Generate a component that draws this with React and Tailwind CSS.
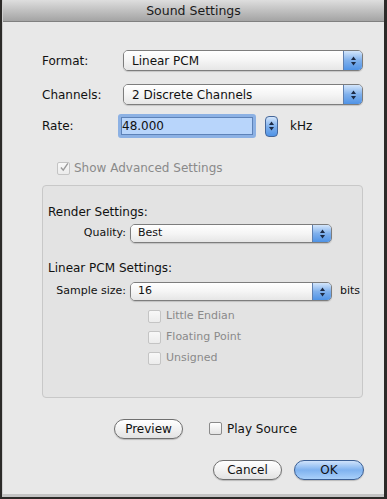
const FONT = { fontFamily: '"DejaVu Sans", "Liberation Sans", sans-serif' };

function Arrows() {
  return (
    <svg width="7" height="12" viewBox="0 0 7 12">
      <path d="M3.5 1.5 L6 5 L1 5 Z" fill="#1c2a44" />
      <path d="M3.5 10.5 L6 7 L1 7 Z" fill="#1c2a44" />
    </svg>
  );
}

function PopUp({ label, className = "", small = false }) {
  return (
    <div
      className={`flex overflow-hidden rounded-[5px] border border-[#7d7d7d] shadow-[0_1px_1px_rgba(0,0,0,0.15)] ${className}`}
    >
      <div
        className={`flex flex-1 items-center bg-gradient-to-b from-[#ffffff] via-[#f5f5f5] to-[#e6e6e6] ${
          small ? "pl-[7px] text-[11px]" : "pl-[8px] text-[12px]"
        } text-[#111]`}
      >
        {label}
      </div>
      <div className="flex w-[19px] items-center justify-center border-l border-[#5f7fae] bg-gradient-to-b from-[#d4e6fb] via-[#7fb0ec] to-[#4f93e6]">
        <Arrows />
      </div>
    </div>
  );
}

function Check({ checked = false, disabled = false }) {
  return (
    <div
      className={`flex h-[13px] w-[13px] shrink-0 items-center justify-center rounded-[2px] border ${
        disabled
          ? "border-[#c4c4c4] bg-gradient-to-b from-[#f8f8f8] to-[#ececec]"
          : "border-[#8a8a8a] bg-gradient-to-b from-[#ffffff] to-[#e4e4e4]"
      }`}
    >
      {checked && (
        <svg width="13" height="13" viewBox="0 0 13 13" className="-mt-[2px] ml-[1px]">
          <path d="M2.5 6.5 L5.5 10 L11.5 1" fill="none" stroke="#9a9a9a" strokeWidth="1.8" />
        </svg>
      )}
    </div>
  );
}

function Pill({ children, blue = false, className = "" }) {
  return (
    <div
      className={`flex h-[20px] items-center justify-center rounded-full border text-[12px] ${
        blue
          ? "border-[#3b5f94] bg-gradient-to-b from-[#cfe3fb] via-[#7fb2ef] to-[#a9d0fa] text-[#111]"
          : "border-[#6f6f6f] bg-gradient-to-b from-[#ffffff] via-[#f2f2f2] to-[#e2e2e2] text-[#111]"
      } shadow-[0_1px_1px_rgba(0,0,0,0.2)] ${className}`}
    >
      {children}
    </div>
  );
}

export default function App() {
  return (
    <div className="flex h-[499px] w-[387px] flex-col bg-[#2c2a28]" style={FONT}>
      <div className="ml-[2px] flex h-[494px] w-[382px] flex-col border-l border-[#cfcfcf] bg-[#e8e8e8]">
        <div className="flex h-[22px] items-center justify-center border-b border-[#808080] bg-gradient-to-b from-[#dedede] to-[#a4a4a4] pt-[1px] text-[12.5px] text-[#1a1a1a]">
          Sound Settings
        </div>

        <div className="flex flex-col pl-[39px] pr-[20px] pt-[28px]">
          <div className="flex h-[21px] items-center">
            <div className="w-[81px] text-[12px] text-[#111]">Format:</div>
            <PopUp label="Linear PCM" className="h-[21px] w-[240px]" />
          </div>

          <div className="mt-[13px] flex h-[21px] items-center">
            <div className="w-[81px] text-[12px] text-[#111]">Channels:</div>
            <PopUp label="2 Discrete Channels" className="h-[21px] w-[240px]" />
          </div>

          <div className="mt-[9px] flex h-[24px] items-center">
            <div className="w-[76px] text-[12px] text-[#111]">Rate:</div>
            <div className="flex h-[24px] w-[138px] items-center rounded-[3px] border-[3px] border-[#8cb1e4] bg-[#b8d5fb] pl-[1px] text-[12px] text-[#111] shadow-[inset_0_0_0_1px_#5d82b8]">
              48.000
            </div>
            <div className="ml-[9px] flex h-[21px] w-[13px] items-center justify-center rounded-[4px] border border-[#45679a] bg-gradient-to-b from-[#d4e6fb] via-[#7fb0ec] to-[#4f93e6]">
              <Arrows />
            </div>
            <div className="ml-[12px] text-[12px] text-[#111]">kHz</div>
          </div>

          <div className="ml-[15px] mt-[22px] flex h-[16px] items-center gap-[4px]">
            <Check checked disabled />
            <span className="text-[12px] text-[#8a8a8a]">Show Advanced Settings</span>
          </div>

          <div className="mt-[9px] flex h-[213px] w-[321px] flex-col rounded-[4px] border border-[#c8c8c8] bg-[#e3e3e3] pl-[5px] pt-[19px]">
            <div className="text-[12px] leading-[15px] text-[#111]">Render Settings:</div>
            <div className="mt-[4px] flex h-[19px] items-center">
              <div className="w-[82px] pr-[4px] text-right text-[11px] text-[#111]">Quality:</div>
              <PopUp label="Best" small className="h-[19px] w-[202px]" />
            </div>

            <div className="mt-[18px] text-[12px] leading-[15px] text-[#111]">Linear PCM Settings:</div>
            <div className="mt-[6px] flex h-[19px] items-center">
              <div className="w-[82px] pr-[4px] text-right text-[11px] text-[#111]">Sample size:</div>
              <PopUp label="16" small className="h-[19px] w-[202px]" />
              <div className="ml-[8px] text-[11px] text-[#111]">bits</div>
            </div>

            <div className="ml-[100px] mt-[8px] flex flex-col gap-[7px]">
              {["Little Endian", "Floating Point", "Unsigned"].map((t) => (
                <div key={t} className="flex h-[14px] items-center gap-[5px]">
                  <Check disabled />
                  <span className="text-[11px] text-[#8a8a8a]">{t}</span>
                </div>
              ))}
            </div>
          </div>

          <div className="mt-[20px] flex h-[21px] items-center">
            <Pill className="ml-[72px] w-[69px]">Preview</Pill>
            <div className="ml-[26px] flex items-center gap-[5px]">
              <Check />
              <span className="text-[12px] text-[#111]">Play Source</span>
            </div>
          </div>

          <div className="mt-[20px] flex h-[21px] items-center">
            <Pill className="ml-[171px] w-[69px]">Cancel</Pill>
            <Pill blue className="ml-[12px] w-[70px]">OK</Pill>
          </div>
        </div>
      </div>
      <div className="ml-[2px] h-[3px] w-[382px] bg-[#c4c4c4]" />
    </div>
  );
}
